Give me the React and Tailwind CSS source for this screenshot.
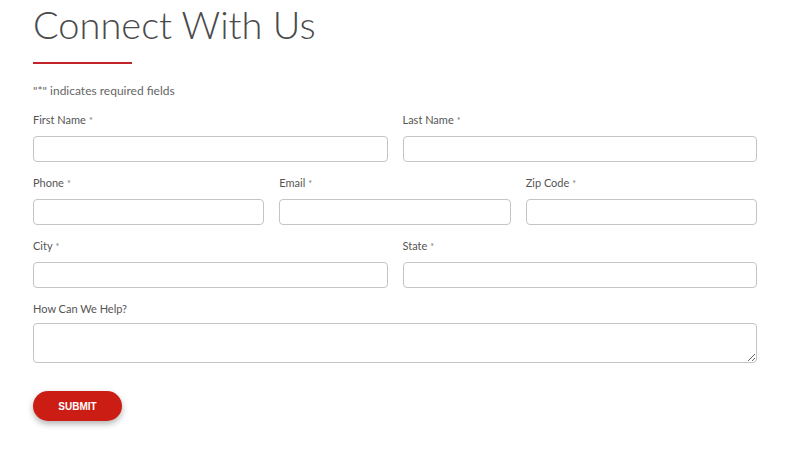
const FONT = { fontFamily: 'Lato, "Noto Sans", sans-serif' };

function Field({ label, required = true }) {
  return (
    <div className="flex flex-col">
      <label className="text-[11px] leading-[14px] text-[#555]">
        {label}
        {required && <span className="ml-[3px] text-[9px] text-[#777]">*</span>}
      </label>
      <input
        type="text"
        className="mt-[8px] h-[26px] w-full rounded-[4px] border border-[#c4c4c4] bg-white"
      />
    </div>
  );
}

export default function App() {
  return (
    <div className="min-h-[452px] w-[803px] bg-white" style={FONT}>
      <div className="w-[724px] pl-[33px] box-content">
        <h1 className="pt-[2px] text-[38px] font-light leading-[44px] text-[#4a4a4a]">Connect With Us</h1>
        <div className="mt-[16px] h-[2px] w-[99px] bg-[#c4232a]" />
        <p className="mt-[20px] text-[12px] leading-[14px] text-[#666]">"*" indicates required fields</p>

        <form className="mt-[15px] flex flex-col gap-[14px]">
          <div className="grid grid-cols-2 gap-x-[15px]">
            <Field label="First Name" />
            <Field label="Last Name" />
          </div>
          <div className="grid grid-cols-3 gap-x-[15px]">
            <Field label="Phone" />
            <Field label="Email" />
            <Field label="Zip Code" />
          </div>
          <div className="grid grid-cols-2 gap-x-[15px]">
            <Field label="City" />
            <Field label="State" />
          </div>
          <div className="flex flex-col">
            <label className="text-[11px] leading-[14px] text-[#555]">How Can We Help?</label>
            <textarea className="mt-[7px] h-[40px] w-full rounded-[4px] border border-[#c4c4c4] bg-white" />
          </div>
          <div className="pt-[14px]">
            <button
              type="button"
              className="h-[30px] w-[89px] rounded-full bg-[#cc1d14] text-[10px] font-bold text-white shadow-[0_3px_6px_rgba(0,0,0,0.3)]"
              style={{ fontFamily: '"Liberation Sans", Arial, sans-serif' }}
            >
              SUBMIT
            </button>
          </div>
        </form>
      </div>
    </div>
  );
}
